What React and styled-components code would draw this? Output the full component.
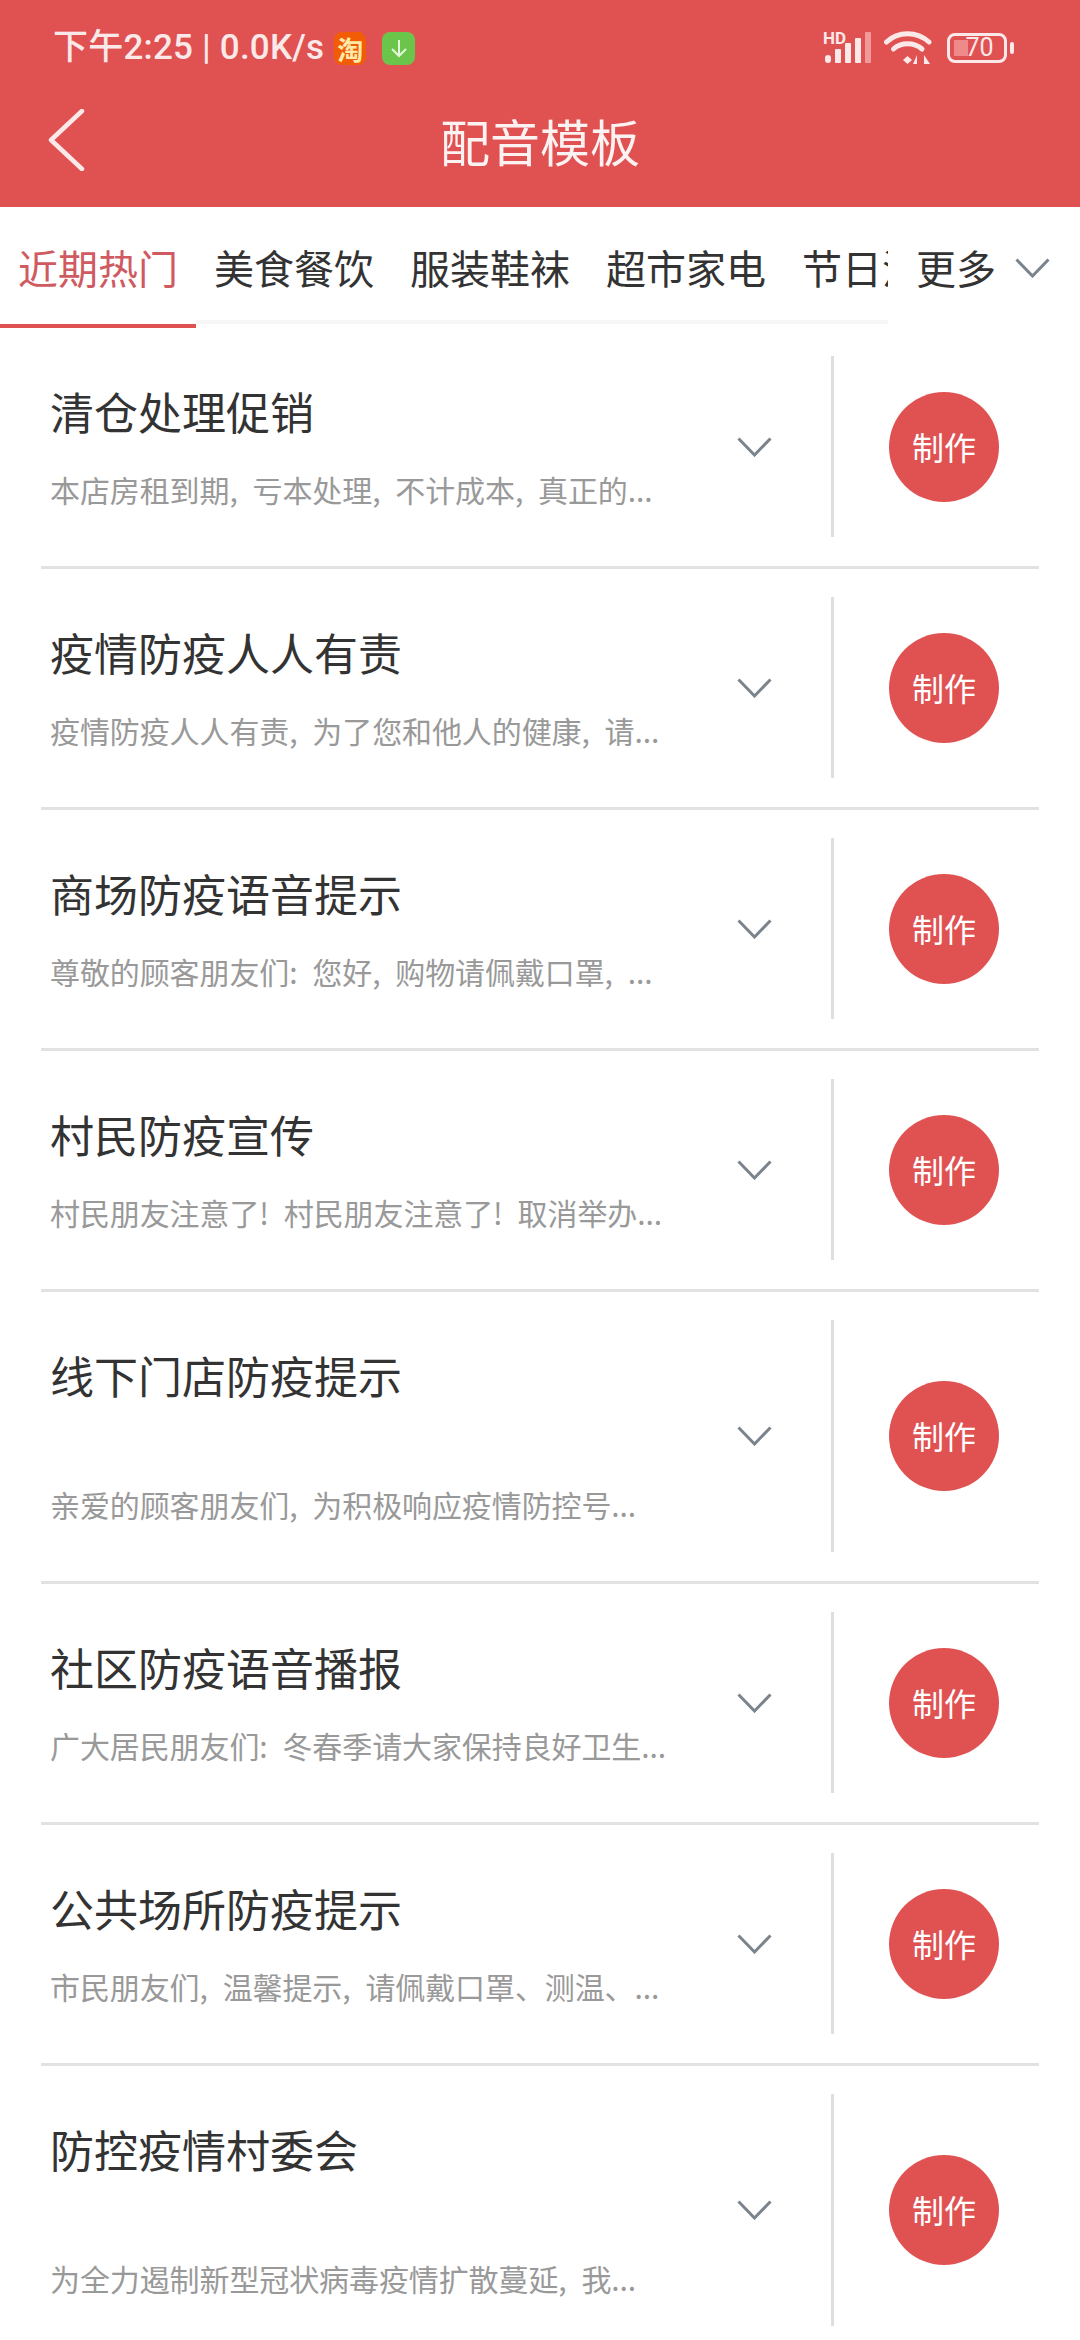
import React from 'react'
import styled, { createGlobalStyle } from 'styled-components'

const RED = '#e05252'
const CJK = '"Noto Sans CJK SC", "Noto Sans", sans-serif'

const GlobalStyle = createGlobalStyle`
  html, body {
    margin: 0;
    padding: 0;
    background: #fff;
  }
  * {
    box-sizing: border-box;
  }
`

const Page = styled.div`
  width: 1080px;
  height: 2340px;
  overflow: hidden;
  background: #fff;
  font-family: ${CJK};
`

const Header = styled.header`
  height: 207px;
  background: ${RED};
`

const StatusBar = styled.div`
  height: 78px;
  padding: 18px 66px 0 53px;
  display: flex;
  justify-content: space-between;
  align-items: center;
`

const StatusLeft = styled.div`
  display: flex;
  align-items: center;
`

const StatusText = styled.span`
  font-family: Roboto, ${CJK};
  font-size: 35px;
  font-weight: 500;
  line-height: 44px;
  color: #fbe9e9;
  letter-spacing: 0.2px;
  white-space: nowrap;
`

const TaobaoBadge = styled.span`
  width: 32px;
  height: 33px;
  margin-left: 10px;
  border-radius: 8px;
  background: #f25c05;
  color: #ffe9a8;
  font-size: 26px;
  font-weight: 700;
  line-height: 33px;
  text-align: center;
`

const GreenBadge = styled.span`
  width: 33px;
  height: 33px;
  margin-left: 16px;
  border-radius: 8px;
  background: #6cc54b;
  display: flex;
  align-items: center;
  justify-content: center;
`

const StatusRight = styled.div`
  display: flex;
  align-items: center;
`

const SignalSvg = styled.svg`
  margin-bottom: 4px;
  overflow: visible;
`

const WifiSvg = styled.svg`
  margin-left: 13px;
`

const BatteryBody = styled.div`
  position: relative;
  width: 60px;
  height: 30px;
  margin-left: 15px;
  border: 3px solid #fbe9e9;
  border-radius: 8px;
  display: flex;
  align-items: center;
  justify-content: center;
`

const BatteryFill = styled.span`
  position: absolute;
  left: 4px;
  top: 4px;
  bottom: 4px;
  width: 14px;
  background: #f3a3a3;
  opacity: 0.7;
`

const BatteryLabel = styled.span`
  position: relative;
  font-family: Roboto, sans-serif;
  font-size: 25px;
  line-height: 24px;
  color: #fbe9e9;
  padding-left: 5px;
`

const BatteryNub = styled.span`
  width: 4px;
  height: 12px;
  margin-left: 3px;
  border-radius: 2px;
  background: #fbe9e9;
`

const NavBar = styled.div`
  height: 129px;
  display: grid;
  grid-template-columns: 1fr auto 1fr;
  align-items: center;
  padding: 0 47px 5px;
`

const NavTitle = styled.h1`
  margin: 0;
  font-size: 50px;
  font-weight: 400;
  line-height: 60px;
  color: #fdf2f2;
`

const TabBar = styled.div`
  display: flex;
  height: 121px;
`

const TabScroller = styled.div`
  width: 888px;
  display: flex;
  overflow: hidden;
`

const Tab = styled.div`
  flex: none;
  width: 196px;
  height: ${props => (props.$active ? '121px' : '117px')};
  padding-top: 40px;
  text-align: center;
  font-size: 40px;
  line-height: 40px;
  white-space: nowrap;
  color: ${props => (props.$active ? '#cf5a5f' : '#333')};
  border-bottom: 4px solid ${props => (props.$active ? RED : '#f6f6f6')};
`

const More = styled.div`
  flex: 1;
  display: flex;
  align-items: flex-start;
  padding: 40px 0 0 28px;
  font-size: 40px;
  line-height: 40px;
  color: #333;
`

const MoreChevron = styled.span`
  margin: 11px 0 0 19px;
  display: flex;
`

const List = styled.div`
  display: flex;
  flex-direction: column;
`

const Row = styled.div`
  margin: 0 41px;
  padding: 28px 0 29px;
  border-bottom: 3px solid #e2e2e2;
  display: flex;
  height: ${props => (props.$tall ? '292px' : '241px')};
`

const RowText = styled.div`
  flex: 1;
  min-width: 0;
  padding: 25px 0 28px 9px;
  display: flex;
  flex-direction: column;
  justify-content: space-between;
`

const RowTitle = styled.div`
  font-size: 44px;
  line-height: 60px;
  color: #333;
  white-space: nowrap;
`

const RowDesc = styled.div`
  font-size: 30px;
  line-height: 40px;
  color: #999;
  letter-spacing: -0.1px;
  white-space: nowrap;
`

const RowChevron = styled.div`
  width: 60px;
  margin-right: 47px;
  display: flex;
  align-items: center;
  justify-content: center;
`

const RowAction = styled.div`
  width: 208px;
  padding-left: 55px;
  border-left: 3px solid #dedede;
  display: flex;
  align-items: center;
`

const MakeButton = styled.button`
  width: 110px;
  height: 110px;
  padding: 0 0 2px;
  border: none;
  border-radius: 50%;
  background: ${RED};
  color: #fff;
  font-family: ${CJK};
  font-size: 32px;
  line-height: 108px;
`

const Chevron = () => (
  <svg width="35" height="20" viewBox="0 0 35 20" fill="none">
    <path d="M1.5 1.5 L17.5 18 L33.5 1.5" stroke="#7b848c" strokeWidth="3" />
  </svg>
)

const BackIcon = () => (
  <svg width="38" height="62" viewBox="0 0 38 62" fill="none">
    <path
      d="M35 2 L4 31 L35 60"
      stroke="#fce8e8"
      strokeWidth="4.5"
      strokeLinecap="round"
      strokeLinejoin="round"
    />
  </svg>
)

const DownloadIcon = () => (
  <svg width="22" height="22" viewBox="0 0 22 22" fill="none">
    <path d="M11 3 V19 M4 12 L11 19 L18 12" stroke="#e4f6dc" strokeWidth="2" />
  </svg>
)

const SignalIcon = () => (
  <SignalSvg width="48" height="36" viewBox="0 -4 48 36" fill="none">
    <text x="0" y="12" fontFamily="Roboto, sans-serif" fontWeight="700" fontSize="17" fill="#fbe9e9">
      HD
    </text>
    <rect x="2" y="23" width="6" height="8" rx="3" fill="#fbe9e9" />
    <rect x="12" y="17" width="6" height="14" rx="1" fill="#fbe9e9" />
    <rect x="22" y="11" width="6" height="20" rx="1" fill="#fbe9e9" />
    <rect x="32" y="6" width="6" height="25" rx="1" fill="#fbe9e9" />
    <rect x="42" y="0" width="6" height="31" rx="1" fill="#f29a9a" />
  </SignalSvg>
)

const WifiIcon = () => (
  <WifiSvg width="48" height="34" viewBox="0 0 48 34" fill="none">
    <path d="M2.5 11 C14 0 33 0 45 11" stroke="#fbe9e9" strokeWidth="5" strokeLinecap="round" />
    <path d="M9.5 18 C17 11 30 11 38 18" stroke="#fbe9e9" strokeWidth="5" strokeLinecap="round" />
    <path d="M19 29 L23.5 25 L28 29 L23.5 33 Z" fill="#fbe9e9" />
    <path d="M33 33 V24 L29 33 Z M40 33 V24 L46 33 Z" fill="#fbe9e9" />
  </WifiSvg>
)

const TABS = ['近期热门', '美食餐饮', '服装鞋袜', '超市家电', '节日活动']

const TEMPLATES = [
  { title: '清仓处理促销', desc: '本店房租到期,\u2002亏本处理,\u2002不计成本,\u2002真正的...' },
  { title: '疫情防疫人人有责', desc: '疫情防疫人人有责,\u2002为了您和他人的健康,\u2002请...' },
  { title: '商场防疫语音提示', desc: '尊敬的顾客朋友们:\u2002您好,\u2002购物请佩戴口罩,\u2002...' },
  { title: '村民防疫宣传', desc: '村民朋友注意了!\u2002村民朋友注意了!\u2002取消举办...' },
  { title: '线下门店防疫提示', desc: '亲爱的顾客朋友们,\u2002为积极响应疫情防控号...', tall: true },
  { title: '社区防疫语音播报', desc: '广大居民朋友们:\u2002冬春季请大家保持良好卫生...' },
  { title: '公共场所防疫提示', desc: '市民朋友们,\u2002温馨提示,\u2002请佩戴口罩、测温、...' },
  { title: '防控疫情村委会', desc: '为全力遏制新型冠状病毒疫情扩散蔓延,\u2002我...', tall: true },
]

const App = () => (
  <Page>
    <GlobalStyle />
    <Header>
      <StatusBar>
        <StatusLeft>
          <StatusText>下午2:25 | 0.0K/s</StatusText>
          <TaobaoBadge>淘</TaobaoBadge>
          <GreenBadge>
            <DownloadIcon />
          </GreenBadge>
        </StatusLeft>
        <StatusRight>
          <SignalIcon />
          <WifiIcon />
          <BatteryBody>
            <BatteryFill />
            <BatteryLabel>70</BatteryLabel>
          </BatteryBody>
          <BatteryNub />
        </StatusRight>
      </StatusBar>
      <NavBar>
        <BackIcon />
        <NavTitle>配音模板</NavTitle>
      </NavBar>
    </Header>
    <TabBar>
      <TabScroller>
        {TABS.map((tab, i) => (
          <Tab key={tab} $active={i === 0}>
            {tab}
          </Tab>
        ))}
      </TabScroller>
      <More>
        更多
        <MoreChevron>
          <Chevron />
        </MoreChevron>
      </More>
    </TabBar>
    <List>
      {TEMPLATES.map(item => (
        <Row key={item.title} $tall={item.tall}>
          <RowText>
            <RowTitle>{item.title}</RowTitle>
            <RowDesc>{item.desc}</RowDesc>
          </RowText>
          <RowChevron>
            <Chevron />
          </RowChevron>
          <RowAction>
            <MakeButton>制作</MakeButton>
          </RowAction>
        </Row>
      ))}
    </List>
  </Page>
)

export default App
